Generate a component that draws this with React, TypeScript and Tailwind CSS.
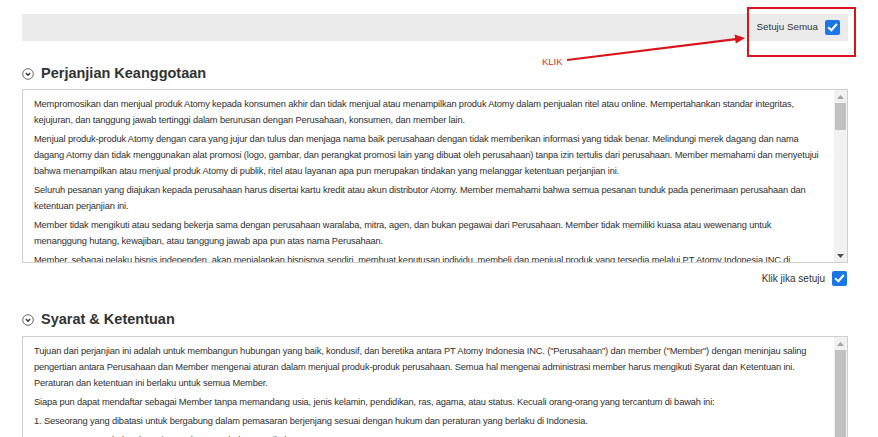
import React from 'react';

const boxOne: string[][] = [
  [
    'Mempromosikan dan menjual produk Atomy kepada konsumen akhir dan tidak menjual atau menampilkan produk Atomy dalam penjualan ritel atau online. Mempertahankan standar integritas,',
    'kejujuran, dan tanggung jawab tertinggi dalam berurusan dengan Perusahaan, konsumen, dan member lain.',
  ],
  [
    'Menjual produk-produk Atomy dengan cara yang jujur dan tulus dan menjaga nama baik perusahaan dengan tidak memberikan informasi yang tidak benar. Melindungi merek dagang dan nama',
    'dagang Atomy dan tidak menggunakan alat promosi (logo, gambar, dan perangkat promosi lain yang dibuat oleh perusahaan) tanpa izin tertulis dari perusahaan. Member memahami dan menyetujui',
    'bahwa menampilkan atau menjual produk Atomy di publik, ritel atau layanan apa pun merupakan tindakan yang melanggar ketentuan perjanjian ini.',
  ],
  [
    'Seluruh pesanan yang diajukan kepada perusahaan harus disertai kartu kredit atau akun distributor Atomy. Member memahami bahwa semua pesanan tunduk pada penerimaan perusahaan dan',
    'ketentuan perjanjian ini.',
  ],
  [
    'Member tidak mengikuti atau sedang bekerja sama dengan perusahaan waralaba, mitra, agen, dan bukan pegawai dari Perusahaan. Member tidak memiliki kuasa atau wewenang untuk',
    'menanggung hutang, kewajiban, atau tanggung jawab apa pun atas nama Perusahaan.',
  ],
  [
    'Member, sebagai pelaku bisnis independen, akan menjalankan bisnisnya sendiri, membuat keputusan individu, membeli dan menjual produk yang tersedia melalui PT Atomy Indonesia INC di',
    'wilayah Indonesia sesuai dengan ketentuan yang berlaku.',
  ],
];

const boxTwo: string[][] = [
  [
    'Tujuan dari perjanjian ini adalah untuk membangun hubungan yang baik, kondusif, dan beretika antara PT Atomy Indonesia INC. ("Perusahaan") dan member ("Member") dengan meninjau saling',
    'pengertian antara Perusahaan dan Member mengenai aturan dalam menjual produk-produk perusahaan. Semua hal mengenai administrasi member harus mengikuti Syarat dan Ketentuan ini.',
    'Peraturan dan ketentuan ini berlaku untuk semua Member.',
  ],
  [
    'Siapa pun dapat mendaftar sebagai Member tanpa memandang usia, jenis kelamin, pendidikan, ras, agama, atau status. Kecuali orang-orang yang tercantum di bawah ini:',
  ],
  [
    '1. Seseorang yang dibatasi untuk bergabung dalam pemasaran berjenjang sesuai dengan hukum dan peraturan yang berlaku di Indonesia.',
  ],
  [
    '2. Seseorang yang belum berusia 17 tahun atau belum menikah.',
  ],
];

function Checked() {
  return (
    <span className="flex h-[15px] w-[15px] shrink-0 items-center justify-center rounded-[2px] bg-[#1a76e3]">
      <svg width="11" height="11" viewBox="0 0 12 12" fill="none">
        <path d="M2 6.4 4.8 9 10 3" stroke="white" strokeWidth="2.2" strokeLinecap="square" />
      </svg>
    </span>
  );
}

function SectionTitle({ title }: { title: string }) {
  return (
    <div className="flex h-5 items-center gap-[7px]">
      <svg width="12" height="12" viewBox="0 0 12 12" fill="none" className="shrink-0">
        <circle cx="6" cy="6" r="5.3" stroke="#6b6b6b" strokeWidth="1" />
        <path d="M3.9 5.1 6 7.2 8.1 5.1" stroke="#333" strokeWidth="1.4" />
      </svg>
      <h2 className="text-[14.5px] font-bold text-[#333]">{title}</h2>
    </div>
  );
}

function TermsBox({ paragraphs, thumbHeight }: { paragraphs: string[][]; thumbHeight: number }) {
  return (
    <div className="flex h-[174px] border border-[#cfcfcf] bg-white">
      <div className="flex-1 overflow-hidden pl-[11px] pt-[6px] text-[9.3px] leading-[16px] tracking-[-0.15px] text-[#2f2f2f]">
        {paragraphs.map((lines, i) => (
          <p key={i} className="mb-[3px]">
            {lines.map((line, j) => (
              <span key={j} className="block whitespace-nowrap">{line}</span>
            ))}
          </p>
        ))}
      </div>
      <div className="flex w-[13px] shrink-0 flex-col bg-[#f1f1f1]">
        <div className="flex h-[13px] items-center justify-center">
          <svg width="7" height="4" viewBox="0 0 7 4"><path d="M0 4 3.5 0 7 4Z" fill="#a3a3a3" /></svg>
        </div>
        <div className="relative flex-1">
          <div className="absolute inset-x-[1px] top-0 bg-[#c1c1c1]" style={{ height: thumbHeight }} />
        </div>
        <div className="flex h-[13px] items-center justify-center">
          <svg width="7" height="4" viewBox="0 0 7 4"><path d="M0 0 3.5 4 7 0Z" fill="#505050" /></svg>
        </div>
      </div>
    </div>
  );
}

export default function App() {
  return (
    <div className="relative h-[437px] w-[878px] overflow-hidden bg-white font-['Liberation_Sans',Arial,sans-serif]">
      <div className="ml-[22px] w-[826px] pt-[14px]">
        <div className="flex h-[27px] items-center justify-end gap-[7px] bg-[#ebebeb] pr-[8px]">
          <span className="text-[9.8px] text-[#333]">Setuju Semua</span>
          <Checked />
        </div>

        <div className="mt-[23px]">
          <SectionTitle title="Perjanjian Keanggotaan" />
        </div>
        <div className="mt-[5px]">
          <TermsBox paragraphs={boxOne} thumbHeight={27} />
        </div>
        <div className="mt-[8px] flex items-center justify-end gap-[7px] pr-[1px]">
          <span className="text-[10px] text-[#333]">Klik jika setuju</span>
          <Checked />
        </div>

        <div className="mt-[24px]">
          <SectionTitle title="Syarat & Ketentuan" />
        </div>
        <div className="mt-[6px]">
          <TermsBox paragraphs={boxTwo} thumbHeight={140} />
        </div>
      </div>

      {/* annotation overlay */}
      <div className="absolute left-[747px] top-[7px] h-[50px] w-[109px] border-2 border-[#d8141c]" />
      <svg className="absolute left-0 top-0" width="878" height="437" viewBox="0 0 878 437" fill="none">
        <path d="M567 60 736 39.2" stroke="#d8141c" strokeWidth="2.2" />
        <path d="M745 38 734.6 34.4 735.8 43.6Z" fill="#d8141c" />
      </svg>
      <span className="absolute left-[542px] top-[55px] text-[9.5px] text-[#d0302f]">KLIK</span>
    </div>
  );
}
